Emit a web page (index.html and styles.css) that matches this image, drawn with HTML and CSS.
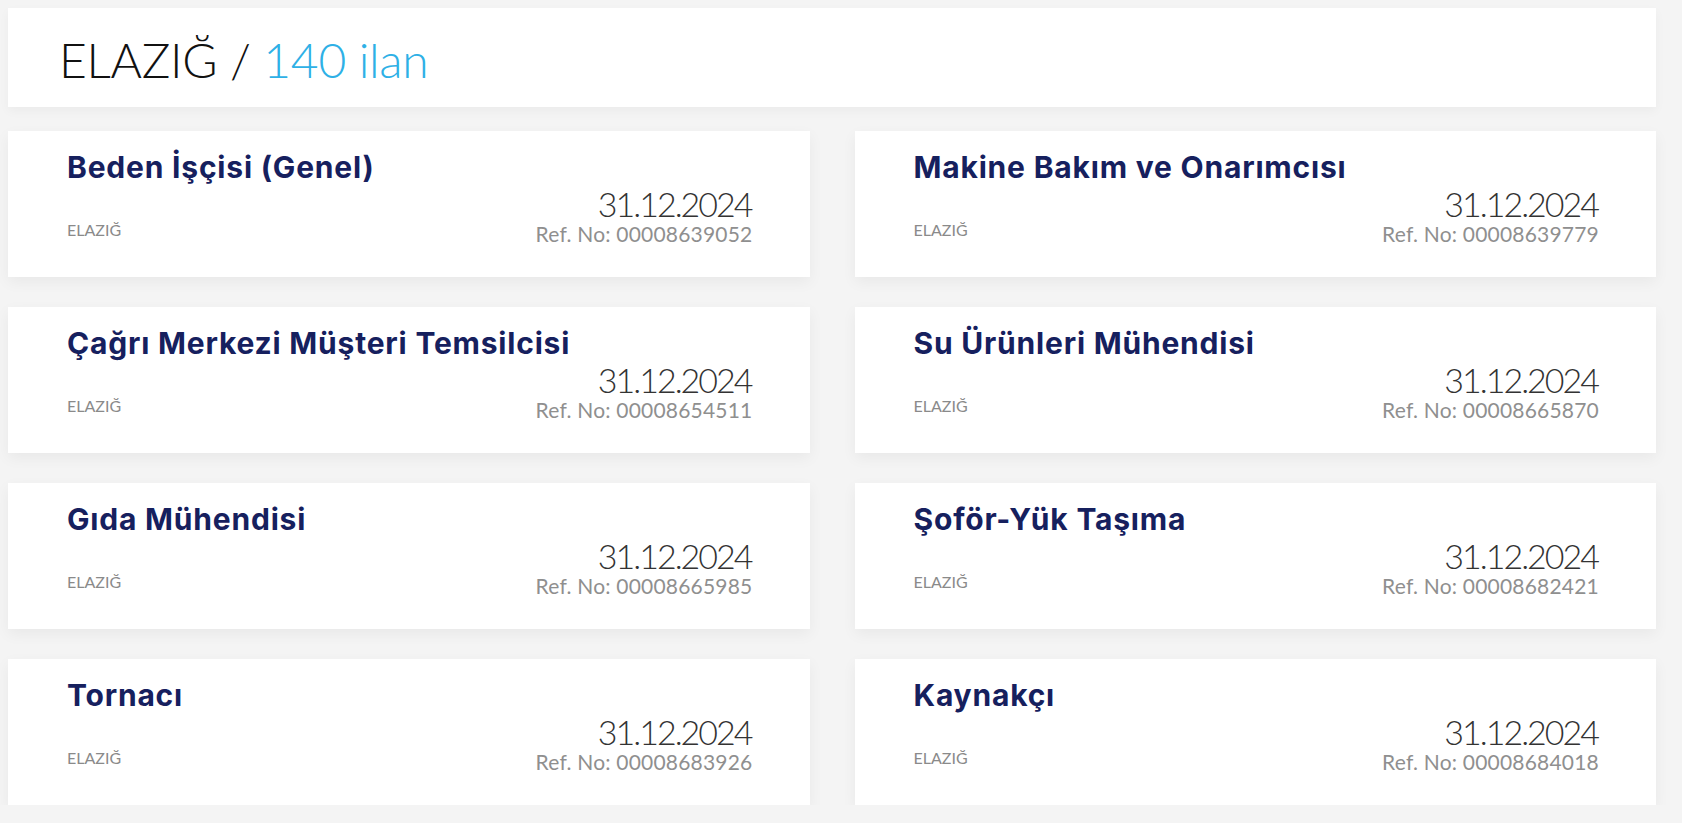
FILE: index.html
```html
<!DOCTYPE html>
<html lang="tr">
<head>
<meta charset="utf-8">
<title>ELAZIĞ / 140 ilan</title>
<link rel="stylesheet" href="styles.css">
</head>
<body>
<div class="page">
  <header class="head-card">
    <h1 class="head-title"><span class="city">ELAZIĞ</span> <span class="slash">/</span> <span class="count">140 ilan</span></h1>
  </header>
  <main class="grid">
    <article class="job">
      <h2 class="job-title">Beden İşçisi (Genel)</h2>
      <div class="job-row">
        <span class="job-city">ELAZIĞ</span>
        <div class="job-meta"><div class="job-date">31.12.2024</div><div class="job-ref">Ref. No: 00008639052</div></div>
      </div>
    </article>
    <article class="job">
      <h2 class="job-title">Makine Bakım ve Onarımcısı</h2>
      <div class="job-row">
        <span class="job-city">ELAZIĞ</span>
        <div class="job-meta"><div class="job-date">31.12.2024</div><div class="job-ref">Ref. No: 00008639779</div></div>
      </div>
    </article>
    <article class="job">
      <h2 class="job-title">Çağrı Merkezi Müşteri Temsilcisi</h2>
      <div class="job-row">
        <span class="job-city">ELAZIĞ</span>
        <div class="job-meta"><div class="job-date">31.12.2024</div><div class="job-ref">Ref. No: 00008654511</div></div>
      </div>
    </article>
    <article class="job">
      <h2 class="job-title">Su Ürünleri Mühendisi</h2>
      <div class="job-row">
        <span class="job-city">ELAZIĞ</span>
        <div class="job-meta"><div class="job-date">31.12.2024</div><div class="job-ref">Ref. No: 00008665870</div></div>
      </div>
    </article>
    <article class="job">
      <h2 class="job-title">Gıda Mühendisi</h2>
      <div class="job-row">
        <span class="job-city">ELAZIĞ</span>
        <div class="job-meta"><div class="job-date">31.12.2024</div><div class="job-ref">Ref. No: 00008665985</div></div>
      </div>
    </article>
    <article class="job">
      <h2 class="job-title">Şoför-Yük Taşıma</h2>
      <div class="job-row">
        <span class="job-city">ELAZIĞ</span>
        <div class="job-meta"><div class="job-date">31.12.2024</div><div class="job-ref">Ref. No: 00008682421</div></div>
      </div>
    </article>
    <article class="job">
      <h2 class="job-title">Tornacı</h2>
      <div class="job-row">
        <span class="job-city">ELAZIĞ</span>
        <div class="job-meta"><div class="job-date">31.12.2024</div><div class="job-ref">Ref. No: 00008683926</div></div>
      </div>
    </article>
    <article class="job">
      <h2 class="job-title">Kaynakçı</h2>
      <div class="job-row">
        <span class="job-city">ELAZIĞ</span>
        <div class="job-meta"><div class="job-date">31.12.2024</div><div class="job-ref">Ref. No: 00008684018</div></div>
      </div>
    </article>
  </main>
</div>
</body>
</html>
```
FILE: styles.css
```css
* { box-sizing: border-box; }
html, body { margin: 0; padding: 0; }
body {
  background: #f4f4f4;
  font-family: "Lato", "Open Sans", sans-serif;
  overflow: hidden;
}
.page {
  padding: 8px 26px 0 8px;
}
.head-card {
  background: #fff;
  height: 99px;
  display: flex;
  align-items: center;
  padding-left: 51px;
  box-shadow: 0 4px 10px rgba(0,0,0,0.04);
}
.head-title {
  margin: 0;
  font-weight: 300;
  font-size: 48px;
  line-height: 1;
  letter-spacing: -0.3px;
  padding-top: 4px;
}
.city, .slash { color: #111; }
.count { color: #2eb0e6; }
.grid {
  margin-top: 24px;
  display: grid;
  grid-template-columns: 1fr 1fr;
  column-gap: 45px;
  row-gap: 30px;
}
.job {
  background: #fff;
  height: 146px;
  padding: 19px 57px 0 59px;
  box-shadow: 0 5px 14px rgba(0,0,0,0.05);
}
.job-title {
  margin: 0;
  font-family: "Inter", "Lato", sans-serif;
  font-weight: 700;
  font-size: 30px;
  line-height: 34px;
  color: #16205e;
  letter-spacing: 0.8px;
}
.job-row {
  margin-top: 2px;
  display: flex;
  justify-content: space-between;
  align-items: flex-end;
}
.job-city {
  font-family: "Lato", sans-serif;
  font-size: 16px;
  line-height: 20px;
  color: #8a8a8a;
  margin-bottom: 6px;
}
.job-meta { text-align: right; }
.job-date {
  font-family: "Lato", sans-serif;
  font-weight: 300;
  font-size: 34px;
  line-height: 36px;
  color: #333;
  letter-spacing: -2px;
  margin-right: 1px;
}
.job-ref {
  font-family: "Lato", sans-serif;
  font-size: 21px;
  line-height: 24px;
  color: #8f8f8f;
  letter-spacing: 0.2px;
}
```
